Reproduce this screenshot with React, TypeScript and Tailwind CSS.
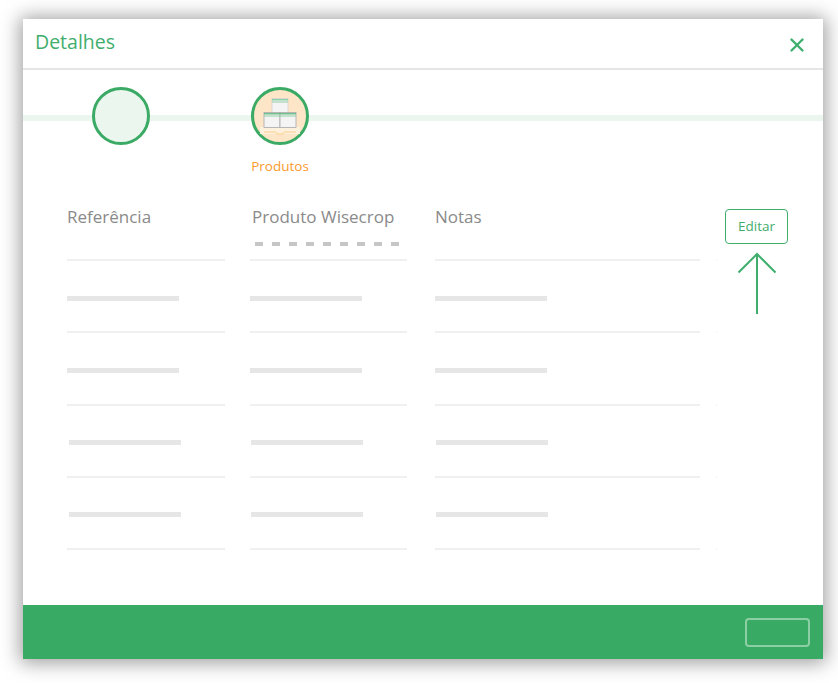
import { X } from "lucide-react"

const columns = [
  { title: "Referência", width: "w-[158px]", mr: "mr-[25px]", lower: "ml-[2px]", pad: "" },
  { title: "Produto Wisecrop", width: "w-[157px]", mr: "mr-[28px]", lower: "ml-[1px]", pad: "pl-[2px]" },
  { title: "Notas", width: "w-[265px]", mr: "mr-[16px]", lower: "ml-[1px]", pad: "" },
]

// the mockup is not quite regular, so each row carries its own numbers
const rows = [
  { id: 1, height: "h-[72px]", top: "pt-[35px]", lower: false },
  { id: 2, height: "h-[73px]", top: "pt-[35px]", lower: false },
  { id: 3, height: "h-[72px]", top: "pt-[34px]", lower: true },
  { id: 4, height: "h-[72px]", top: "pt-[34px]", lower: true },
]

const dashes = [1, 2, 3, 4, 5, 6, 7, 8, 9]

function BoxesIcon() {
  return (
    <svg className="mt-[4px]" width="42" height="40" viewBox="0 0 42 40">
      <rect x="1" y="29" width="40" height="7" fill="#fdf0dd" />
      <path d="M5 34h12l1 2h6l1-2h12" fill="none" stroke="#fbd08e" strokeWidth="1" />
      <rect x="13" y="0.5" width="16" height="15" fill="#f4f4f4" stroke="#c9c9c9" strokeWidth="0.6" />
      <rect x="13" y="1" width="16" height="1.5" fill="#8fd0a6" />
      <rect x="13" y="3.5" width="16" height="1" fill="#8fd0a6" />
      <rect x="5" y="14.5" width="16" height="15" fill="#f4f4f4" stroke="#a8a8a8" strokeWidth="0.8" />
      <rect x="21" y="14.5" width="16" height="15" fill="#f4f4f4" stroke="#a8a8a8" strokeWidth="0.8" />
      <rect x="5" y="15" width="32" height="1.5" fill="#6fc08d" />
      <rect x="5" y="17.5" width="32" height="1" fill="#8fd0a6" />
    </svg>
  )
}

export default function App() {
  return (
    <div className="w-[838px] h-[683px] bg-white pl-[23px] pt-[19px] font-['Open_Sans',sans-serif]">
      <div className="w-[800px] h-[640px] bg-white flex flex-col shadow-[0_1px_18px_3px_rgba(0,0,0,0.38)]">

        {/* header */}
        <div className="h-[51px] shrink-0 border-b-2 border-[#e6e6e6] flex items-center justify-between pl-[12px] pr-[15px]">
          <span className="text-[19.5px] leading-none text-[#3fae6c] -mt-[3px]">Detalhes</span>
          <X size={22} strokeWidth={2.6} className="text-[#3fae6c] mt-[2px]" />
        </div>

        {/* steps */}
        <div className="relative h-[139px] shrink-0 flex pl-[69px] pt-[17px] gap-[101px]">
          <div className="absolute left-0 right-0 top-[45px] h-[6px] bg-[#ebf6ef]" />
          <div className="relative w-[58px] h-[58px] rounded-full border-[3px] border-[#3aaa64] bg-[#ebf6ef]" />
          <div className="relative w-[58px] flex flex-col items-center">
            <div className="w-[58px] h-[58px] shrink-0 rounded-full border-[3px] border-[#3aaa64] bg-[#fde6c8] flex items-center justify-center">
              <BoxesIcon />
            </div>
            <span className="mt-[15px] text-[13.5px] leading-none text-[#fb9a2c] whitespace-nowrap">Produtos</span>
          </div>
        </div>

        {/* table */}
        <div className="relative flex-1 flex pl-[44px]">
          {columns.map((col, i) => (
            <div key={col.title} className={`${col.width} ${col.mr} flex flex-col`}>
              <div className="h-[52px] border-b-2 border-[#f0f0f0]">
                <span className={`block ${col.pad} -mt-[1px] text-[17px] leading-none text-[#8a8a8a] whitespace-nowrap`}>{col.title}</span>
                {i === 1 && (
                  <div className="mt-[17px] ml-[5px] flex gap-[9px]">
                    {dashes.map((d) => (
                      <div key={d} className="w-[8px] h-[4px] bg-[#c6c6c6]" />
                    ))}
                  </div>
                )}
              </div>
              {rows.map((row) => (
                <div key={row.id} className={`${row.height} ${row.top} border-b-2 border-[#f0f0f0]`}>
                  <div className={`w-[112px] h-[5px] bg-[#e6e6e6] ${row.lower ? col.lower : ""}`} />
                </div>
              ))}
            </div>
          ))}
          <div className="w-[1px] flex flex-col">
            <div className="h-[52px] border-b-2 border-[#f2f2f2]" />
            {rows.map((row) => (
              <div key={row.id} className={`${row.height} border-b-2 border-[#f2f2f2]`} />
            ))}
          </div>
          <div className="w-[63px] ml-[8px]">
            <button className="w-[63px] h-[35px] rounded-[4px] border border-[#3fae6c] text-[13.5px] text-[#3fae6c]">Editar</button>
          </div>
          <svg className="absolute left-[714px] top-[43px]" width="40" height="63" viewBox="0 0 40 63">
            <path d="M20 62V2M1.5 20.5L20 2l18.5 18.5" fill="none" stroke="#3fae6c" strokeWidth="2" />
          </svg>
        </div>

        {/* footer */}
        <div className="h-[54px] shrink-0 bg-[#38aa63] flex items-center justify-end pr-[13px]">
          <div className="w-[65px] h-[29px] rounded-[4px] border-2 border-[#8ccfa4]" />
        </div>
      </div>
    </div>
  )
}
